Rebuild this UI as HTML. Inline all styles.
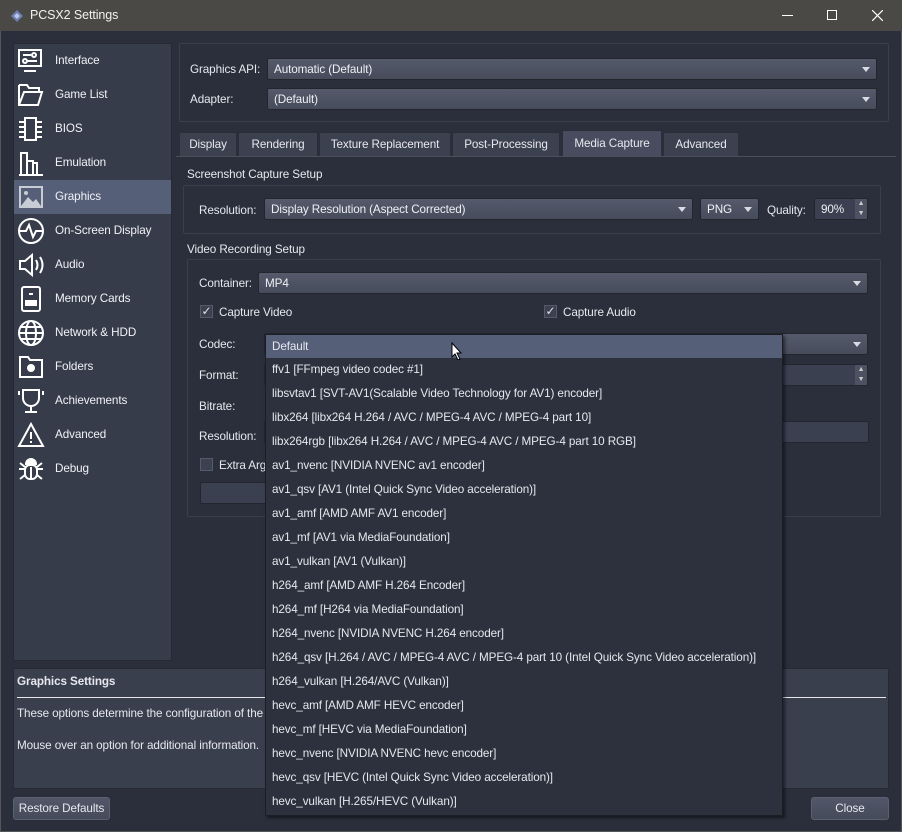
<!DOCTYPE html>
<html><head><meta charset="utf-8"><style>
*{box-sizing:border-box;margin:0;padding:0}
body{width:902px;height:832px;overflow:hidden;background:#2b2f3b;font-family:"Liberation Sans","DejaVu Sans",sans-serif;font-size:11.7px;letter-spacing:-0.1px;color:#e6e8ee;position:relative}
.a{position:absolute}
.title{left:0;top:0;width:902px;height:31px;background:#4a4946;}
.frame{left:0;top:31px;width:902px;height:801px;border:1px solid #55565a;border-top:none}
.side{left:13px;top:43px;width:159px;height:618px;background:#373c4b;border:1px solid #262a33}
.item{position:absolute;left:0;width:157px;height:34px;line-height:34px;padding-left:41px;color:#f0f2f6}
.item svg{position:absolute;left:3px;top:3px}
.sel{background:#555f78}
.gb{border:1px solid #3a3f4c;border-radius:2px}
.combo{position:absolute;height:22px;line-height:21px;padding-left:6px;border:1px solid #23262e;border-radius:2px;background:linear-gradient(#545a6b,#474c5b);color:#eef0f4}
.combo:after{content:"";position:absolute;right:6px;top:8px;border-left:4px solid transparent;border-right:4px solid transparent;border-top:5px solid #d8dbe2}
.field{position:absolute;height:22px;line-height:21px;padding-left:6px;border:1px solid #23262e;border-radius:2px;background:#3b4051;color:#eef0f4}
.tab{position:absolute;top:132px;height:24px;line-height:24px;text-align:center;background:#3c4150;border:1px solid #2a2e38;border-bottom:none;border-radius:2px 2px 0 0}
.lbl{position:absolute}
.cb{position:absolute;width:13px;height:13px;border:1px solid #555b6a;background:#3c4150;font-size:12px;line-height:11px;text-align:center;color:#e0e2e8}
.pop{left:265px;top:334px;width:518px;height:482px;background:#2c313d;border:1px solid #1b1e25;box-shadow:2px 2px 3px rgba(0,0,0,.5)}
.pop div{height:24px;line-height:24px;padding-left:6px;white-space:nowrap}
.btn{position:absolute;height:23px;line-height:21px;text-align:center;border:1px solid #5a6070;border-radius:3px;background:linear-gradient(#515769,#464b5a)}
</style></head><body>
<div class="a title">
<svg class="a" style="left:10px;top:9px" width="14" height="14" viewBox="0 0 14 14"><path d="M7 1L13 7L7 13L1 7Z" fill="#6c7fb0"/><path d="M7 4L10 7L7 10L4 7Z" fill="#b9c6e6"/></svg>
<div class="a" style="left:30px;top:8px;color:#f2f2f2;font-size:12.5px">PCSX2 Settings</div>
<div class="a" style="left:782px;top:15px;width:11px;height:1px;background:#fff"></div>
<div class="a" style="left:827px;top:10px;width:10px;height:10px;border:1px solid #fff"></div>
<svg class="a" style="left:872px;top:10px" width="11" height="11"><path d="M0 0L11 11M11 0L0 11" stroke="#fff" stroke-width="1.2"/></svg>
</div>
<div class="a frame"></div>
<div class="a side">
<div class="item" style="top:0">Interface<svg width="28" height="28" fill="none" stroke="#fff" stroke-width="2"><rect x="2" y="3" width="22" height="16"/><path d="M7 24h12M6 8h8M10 14h10"/><circle cx="17" cy="8" r="2"/><circle cx="8" cy="14" r="2"/></svg></div>
<div class="item" style="top:34px">Game List<svg width="28" height="28" fill="none" stroke="#fff" stroke-width="2"><path d="M2 4h8l2 3h10v4M2 4v20h19l4-13H7L2 24"/></svg></div>
<div class="item" style="top:68px">BIOS<svg width="28" height="28" fill="none" stroke="#fff" stroke-width="2"><rect x="8" y="3" width="11" height="22"/><path d="M2 7h6M2 12h6M2 17h6M2 22h6M19 7h6M19 12h6M19 17h6M19 22h6"/></svg></div>
<div class="item" style="top:102px">Emulation<svg width="28" height="28" fill="none" stroke="#fff" stroke-width="2"><path d="M4 26V4h6v22M10 12h6v14M16 14h4v12M2 26h24"/></svg></div>
<div class="item sel" style="top:136px">Graphics<svg width="28" height="28"><rect x="2" y="3" width="24" height="22" fill="#c8ccd4"/><rect x="4" y="5" width="20" height="18" fill="#555f78"/><path d="M4 23l7-9 5 5 3-3 5 7z" fill="#c8ccd4"/><circle cx="9" cy="10" r="2" fill="#c8ccd4"/></svg></div>
<div class="item" style="top:170px">On-Screen Display<svg width="30" height="28" fill="none" stroke="#fff" stroke-width="2"><circle cx="14" cy="14" r="12"/><path d="M3 14h6l3-6 4 12 3-6h7"/></svg></div>
<div class="item" style="top:204px">Audio<svg width="28" height="28" fill="none" stroke="#fff" stroke-width="2"><path d="M3 10h5l7-6v20l-7-6H3z M19 9q3 5 0 10M23 6q5 8 0 16"/></svg></div>
<div class="item" style="top:238px">Memory Cards<svg width="28" height="28" fill="none" stroke="#fff" stroke-width="2"><rect x="5" y="2" width="18" height="24" rx="2"/><rect x="9" y="16" width="10" height="4" fill="#fff"/><path d="M12 9h4" /></svg></div>
<div class="item" style="top:272px">Network &amp; HDD<svg width="28" height="28" fill="none" stroke="#fff" stroke-width="2"><circle cx="14" cy="14" r="12"/><ellipse cx="14" cy="14" rx="5" ry="12"/><path d="M2 14h24M4 8h20M4 20h20"/></svg></div>
<div class="item" style="top:306px">Folders<svg width="28" height="28" fill="none" stroke="#fff" stroke-width="2"><path d="M3 4h8l2 3h12v17H3z"/><circle cx="14" cy="15" r="3" fill="#fff"/></svg></div>
<div class="item" style="top:340px">Achievements<svg width="28" height="28" fill="none" stroke="#fff" stroke-width="2"><path d="M6 3h16v8a8 8 0 0 1-16 0zM14 19v5M8 25h12M2 4v4M26 4v4"/></svg></div>
<div class="item" style="top:374px">Advanced<svg width="28" height="28" fill="none" stroke="#fff" stroke-width="2"><path d="M14 3L26 25H2z M14 11v7M14 20v2"/></svg></div>
<div class="item" style="top:408px">Debug<svg width="28" height="28" fill="none" stroke="#fff" stroke-width="2"><path d="M9 9a5 5 0 0 1 10 0z" fill="#fff"/><rect x="8" y="10" width="12" height="14" rx="5"/><path d="M14 12v12M2 14h6M20 14h6M3 8l5 4M25 8l-5 4M3 24l5-4M25 24l-5-4"/></svg></div>
</div>

<div class="a gb" style="left:179px;top:43px;width:710px;height:79px"></div>
<div class="lbl" style="left:190px;top:63px">Graphics API:</div>
<div class="combo" style="left:267px;top:58px;width:610px">Automatic (Default)</div>
<div class="lbl" style="left:190px;top:93px">Adapter:</div>
<div class="combo" style="left:267px;top:88px;width:610px">(Default)</div>

<div class="tab" style="left:179px;width:58px">Display</div>
<div class="tab" style="left:238px;width:80px">Rendering</div>
<div class="tab" style="left:319px;width:132px">Texture Replacement</div>
<div class="tab" style="left:452px;width:108px">Post-Processing</div>
<div class="tab" style="left:562px;top:130px;height:27px;line-height:26px;width:100px;background:#474d5e">Media Capture</div>
<div class="tab" style="left:663px;width:76px">Advanced</div>
<div class="a" style="left:176px;top:156px;width:720px;height:1px;background:#4a4f5c"></div>

<div class="lbl" style="left:187px;top:168px">Screenshot Capture Setup</div>
<div class="a gb" style="left:183px;top:185px;width:698px;height:49px"></div>
<div class="lbl" style="left:199px;top:204px">Resolution:</div>
<div class="combo" style="left:264px;top:198px;width:429px">Display Resolution (Aspect Corrected)</div>
<div class="combo" style="left:700px;top:198px;width:59px">PNG</div>
<div class="lbl" style="left:767px;top:204px">Quality:</div>
<div class="field" style="left:814px;top:198px;width:54px">90%<span class="a" style="right:0;top:0;width:12px;height:20px;background:#4d5262;font-size:7px;line-height:10px;text-align:center;color:#ccc">▲<br>▼</span></div>

<div class="lbl" style="left:187px;top:243px">Video Recording Setup</div>
<div class="a gb" style="left:187px;top:259px;width:694px;height:258px"></div>
<div class="lbl" style="left:199px;top:277px">Container:</div>
<div class="combo" style="left:258px;top:272px;width:610px">MP4</div>
<div class="cb" style="left:200px;top:305px">✓</div><div class="lbl" style="left:219px;top:306px">Capture Video</div>
<div class="cb" style="left:544px;top:305px">✓</div><div class="lbl" style="left:563px;top:306px">Capture Audio</div>
<div class="lbl" style="left:199px;top:338px">Codec:</div>
<div class="combo" style="left:264px;top:333px;width:604px"></div>
<div class="lbl" style="left:199px;top:369px">Format:</div>
<div class="field" style="left:264px;top:364px;width:604px"><span class="a" style="right:0;top:0;width:12px;height:20px;background:#4d5262;font-size:7px;line-height:10px;text-align:center;color:#ccc">▲<br>▼</span></div>
<div class="lbl" style="left:199px;top:400px">Bitrate:</div>
<div class="lbl" style="left:199px;top:430px">Resolution:</div>
<div class="field" style="left:264px;top:421px;width:605px"></div>
<div class="cb" style="left:200px;top:458px"></div><div class="lbl" style="left:219px;top:459px">Extra Arguments</div>
<div class="field" style="left:200px;top:482px;width:200px"></div>

<div class="a gb" style="left:13px;top:668px;width:876px;height:121px;background:#3a3f4e;border-color:#262a33"></div>
<div class="lbl" style="left:17px;top:675px;font-weight:bold">Graphics Settings</div>
<div class="a" style="left:17px;top:697px;width:869px;height:1px;background:#e6e8ee"></div>
<div class="lbl" style="left:17px;top:707px">These options determine the configuration of the graphics output.</div>
<div class="lbl" style="left:17px;top:739px">Mouse over an option for additional information.</div>
<div class="btn" style="left:13px;top:797px;width:97px">Restore Defaults</div>
<div class="btn" style="left:811px;top:797px;width:78px">Close</div>

<div class="a pop">
<div style="background:#555f78;height:23px;line-height:23px">Default</div>
<div>ffv1 [FFmpeg video codec #1]</div>
<div>libsvtav1 [SVT-AV1(Scalable Video Technology for AV1) encoder]</div>
<div>libx264 [libx264 H.264 / AVC / MPEG-4 AVC / MPEG-4 part 10]</div>
<div>libx264rgb [libx264 H.264 / AVC / MPEG-4 AVC / MPEG-4 part 10 RGB]</div>
<div>av1_nvenc [NVIDIA NVENC av1 encoder]</div>
<div>av1_qsv [AV1 (Intel Quick Sync Video acceleration)]</div>
<div>av1_amf [AMD AMF AV1 encoder]</div>
<div>av1_mf [AV1 via MediaFoundation]</div>
<div>av1_vulkan [AV1 (Vulkan)]</div>
<div>h264_amf [AMD AMF H.264 Encoder]</div>
<div>h264_mf [H264 via MediaFoundation]</div>
<div>h264_nvenc [NVIDIA NVENC H.264 encoder]</div>
<div>h264_qsv [H.264 / AVC / MPEG-4 AVC / MPEG-4 part 10 (Intel Quick Sync Video acceleration)]</div>
<div>h264_vulkan [H.264/AVC (Vulkan)]</div>
<div>hevc_amf [AMD AMF HEVC encoder]</div>
<div>hevc_mf [HEVC via MediaFoundation]</div>
<div>hevc_nvenc [NVIDIA NVENC hevc encoder]</div>
<div>hevc_qsv [HEVC (Intel Quick Sync Video acceleration)]</div>
<div>hevc_vulkan [H.265/HEVC (Vulkan)]</div>
</div>
<svg class="a" style="left:451px;top:342px" width="12" height="18"><path d="M1 1v14l3-3 3 6 2-1-3-6h4z" fill="#fff" stroke="#000" stroke-width="1"/></svg>
</body></html>
